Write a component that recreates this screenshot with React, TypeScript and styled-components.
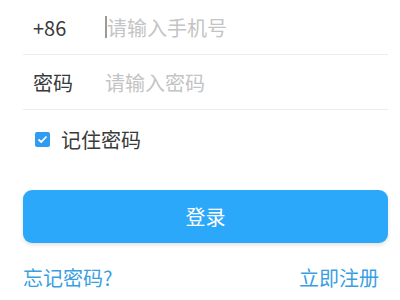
import { createGlobalStyle, styled } from "styled-components";

const GlobalStyle = createGlobalStyle`
  html, body {
    margin: 0;
    padding: 0;
    background: #ffffff;
  }
  body {
    font-family: "Noto Sans CJK SC", "Noto Sans", sans-serif;
  }
`;

const Page = styled.div`
  width: 400px;
  height: 300px;
  overflow: hidden;
  padding: 0 12px 0 23px;
  box-sizing: border-box;
`;

const Field = styled.div`
  display: flex;
  align-items: center;
  height: 54px;
  border-bottom: 1px solid #ececec;
  padding-left: 10px;
`;

const Label = styled.span`
  width: 72px;
  font-size: 20px;
  color: #3a3a3a;
  flex-shrink: 0;
`;

const Input = styled.input<{ $caret?: boolean }>`
  flex: 1;
  border: none;
  outline: none;
  padding: 0;
  font-family: inherit;
  font-size: 20px;
  color: #333333;
  background: transparent;
  caret-color: #999;
  border-left: ${(p) => (p.$caret ? "2px solid #9a9a9a" : "none")};
  height: ${(p) => (p.$caret ? "22px" : "auto")};
  &::placeholder {
    color: #c4c4c4;
  }
`;

const Remember = styled.label`
  display: flex;
  align-items: center;
  gap: 11px;
  height: 58px;
  padding-left: 12px;
  font-size: 20px;
  color: #3a3a3a;
`;

const Check = styled.span`
  width: 15px;
  height: 15px;
  border-radius: 2px;
  background: #2f9cf1;
  display: flex;
  align-items: center;
  justify-content: center;
`;

const LoginButton = styled.button`
  display: block;
  width: 100%;
  height: 53px;
  margin-top: 22px;
  border: none;
  border-radius: 9px;
  background: #2ca8fb;
  color: #ffffff;
  font-family: inherit;
  font-size: 20px;
  box-shadow: 0 2px 4px rgba(0, 0, 0, 0.12);
`;

const Links = styled.div`
  display: flex;
  justify-content: space-between;
  align-items: center;
  margin-top: 20px;
  padding-right: 9px;
`;

const LinkText = styled.a`
  font-size: 20px;
  color: #3a9fe2;
  text-decoration: none;
`;

export default function App() {
  return (
    <>
      <GlobalStyle />
      <Page>
        <Field>
          <Label>+86</Label>
          <Input $caret placeholder="请输入手机号" />
        </Field>
        <Field>
          <Label>密码</Label>
          <Input type="password" placeholder="请输入密码" />
        </Field>
        <Remember>
          <Check>
            <svg width="11" height="9" viewBox="0 0 11 9">
              <path d="M1.5 4.5 L4.2 7 L9.5 1.5" fill="none" stroke="#fff" strokeWidth="1.8" />
            </svg>
          </Check>
          记住密码
        </Remember>
        <LoginButton>登录</LoginButton>
        <Links>
          <LinkText>忘记密码?</LinkText>
          <LinkText>立即注册</LinkText>
        </Links>
      </Page>
    </>
  );
}
